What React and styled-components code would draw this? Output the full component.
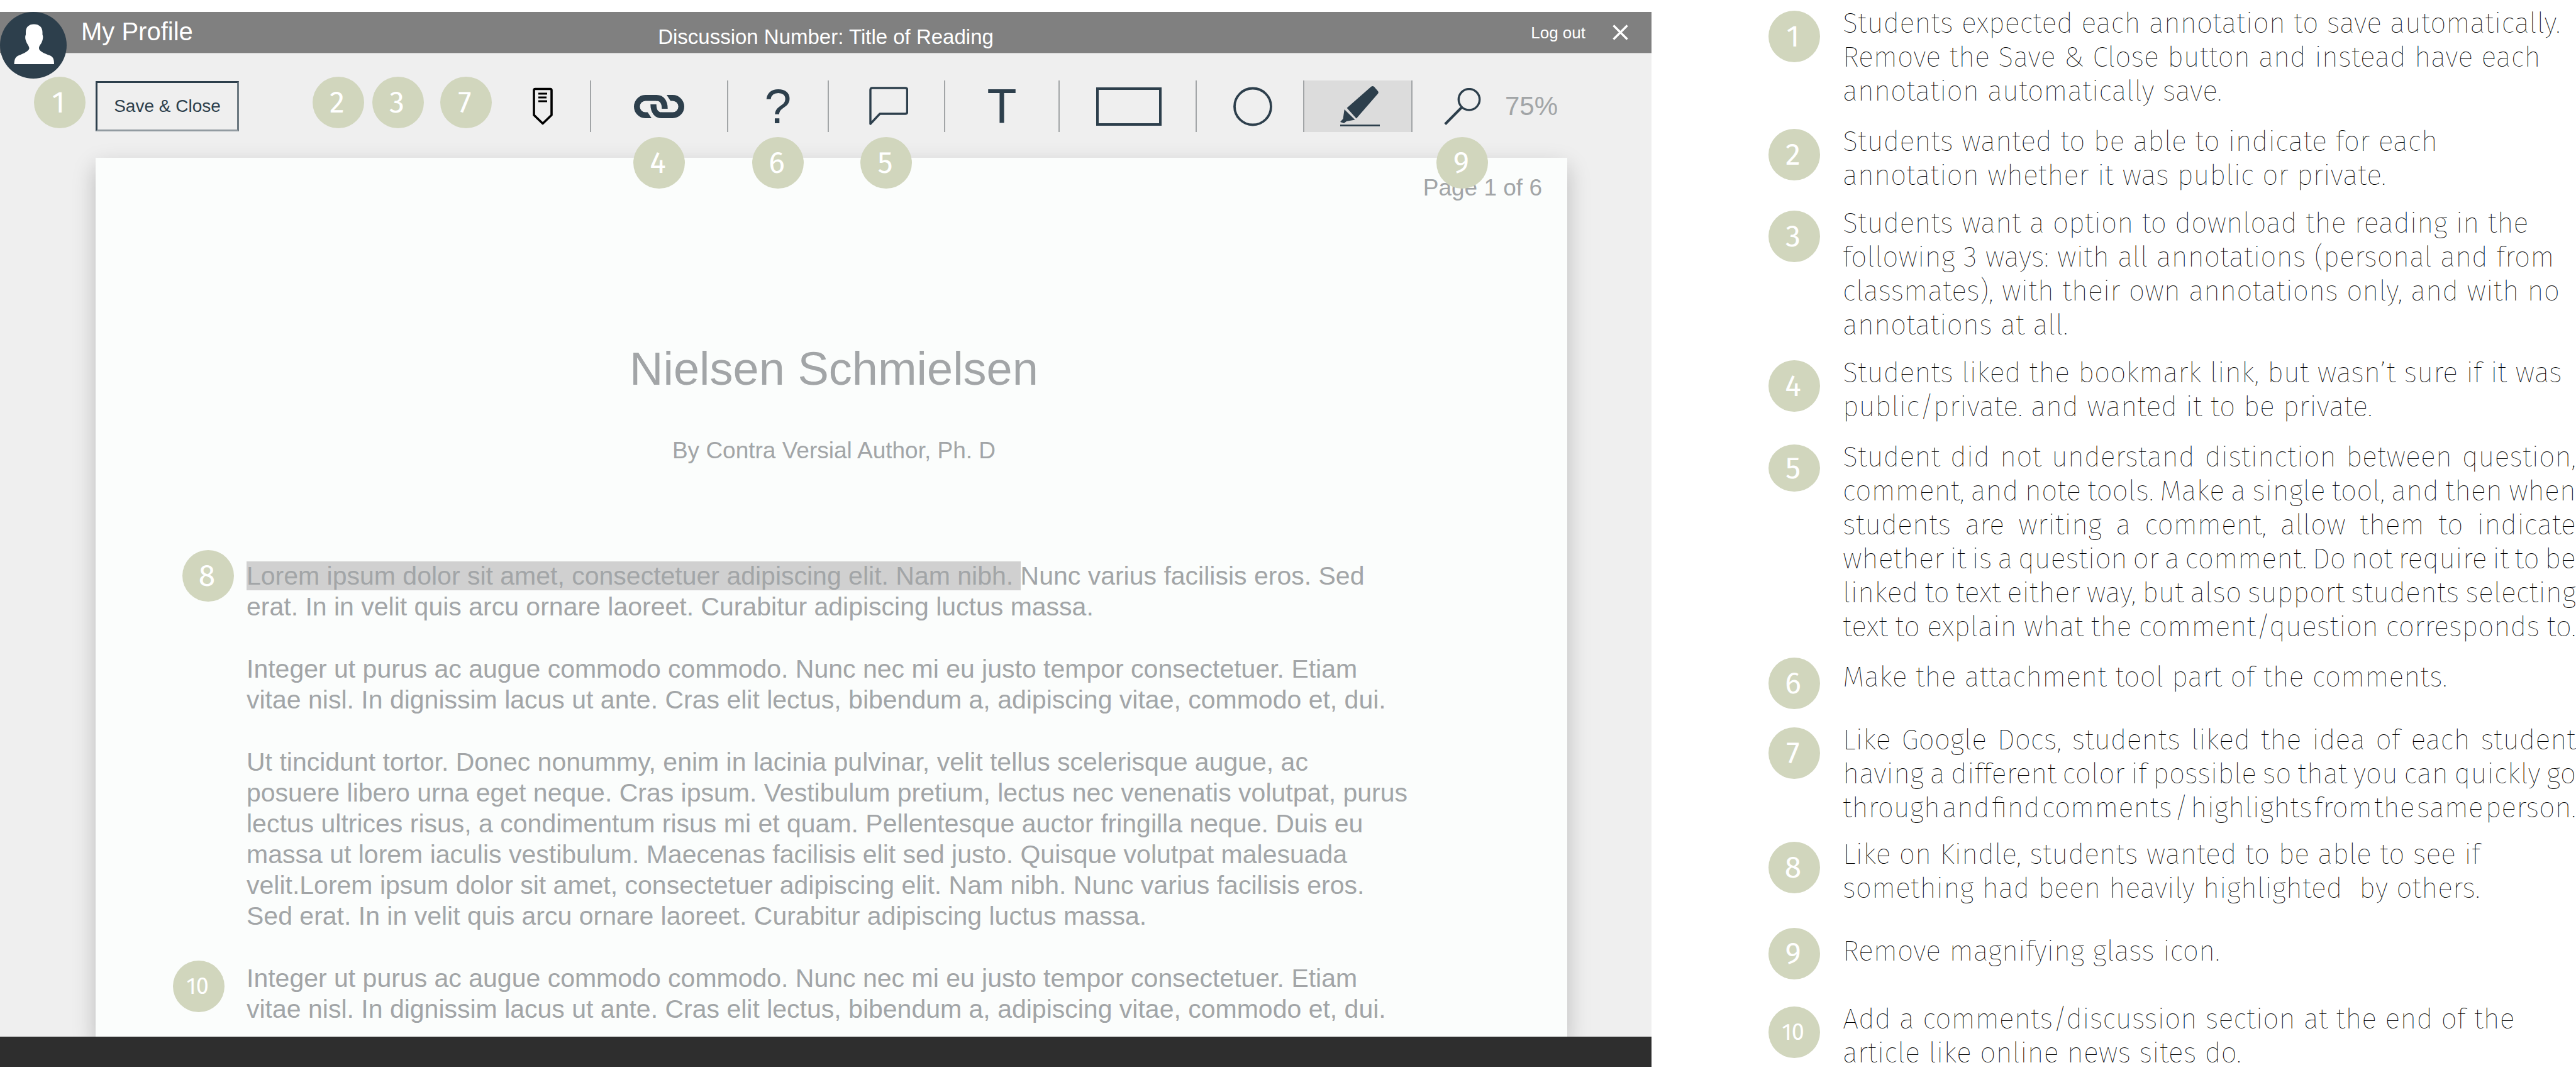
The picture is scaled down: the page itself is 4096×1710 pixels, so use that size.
import React from 'react';
import styled, { createGlobalStyle, css } from 'styled-components';

const ink = '#2d3f4c';
const grey = '#a2a5a7';
const panel = '#efefef';
const sage = '#d1d6bd';
const sans = '"Liberation Sans", Arial, sans-serif';
const fira = '"Fira Sans", "Noto Sans", sans-serif';

const GlobalStyle = createGlobalStyle`
  *, *::before, *::after { box-sizing: border-box; }
  body { margin: 0; background: #fff; font-family: ${sans}; }
  h1, p, ol { margin: 0; padding: 0; font-weight: 400; }
  svg { display: block; flex: none; }
  button { font: inherit; color: inherit; background: none; border: 0; padding: 0; cursor: pointer; }
  a { color: inherit; text-decoration: none; }
`;

const Layout = styled.div`
  display: grid;
  grid-template-columns: 2626fr 1470fr;
  align-items: start;
`;

/* ---------- numbered markers ---------- */

const Badge = styled.span`
  display: flex;
  align-items: center;
  justify-content: center;
  flex: none;
  width: 82px;
  height: ${(p) => (p.$squat ? 75 : 82)}px;
  padding-right: 4px;
  border-radius: 50%;
  background: ${sage};
  color: #fff;
  font: 400 ${(p) => (p.$small ? 36 : 48)}px/1 ${fira};
`;

const Pin = styled(Badge)`
  position: absolute;
  z-index: 3;
  top: ${(p) => p.$top}px;
  left: ${(p) => (p.$left === undefined ? 'calc(50% - 41px)' : `${p.$left}px`)};
`;

/* ---------- viewer ---------- */

const Viewer = styled.main`
  margin-top: 19px;
  background: ${panel};
`;

const Header = styled.header`
  position: relative;
  z-index: 4;
  display: grid;
  grid-template-columns: 1fr auto 1fr;
  align-items: center;
  height: 66px;
  background: #808080;
  border-bottom: 1px solid #c4c4c4;
  color: #fff;
`;

const ProfileLink = styled.a`
  padding: 0 0 4px 129px;
  font-size: 40px;
  line-height: 46px;

  svg {
    position: absolute;
    top: 0;
    left: 0;
  }
`;

const ReadingTitle = styled.div`
  padding-top: 14px;
  font-size: 33px;
  line-height: 38px;
`;

const Session = styled.div`
  display: flex;
  justify-content: flex-end;
  align-items: center;
  gap: 43px;
  padding-right: 37px;
  font-size: 26px;
  line-height: 30px;
`;

const Toolbar = styled.div`
  position: relative;
  z-index: 3;
  display: flex;
  align-items: center;
  padding: 43px 149px 41px 152px;
  color: ${ink};
`;

const SaveButton = styled.button`
  width: 228px;
  height: 80px;
  border: 3px solid ${ink};
  border-right-color: #6c7981;
  border-bottom-color: #929ba1;
  font-size: 28px;
`;

const Tools = styled.div`
  display: flex;
  height: 82px;
  margin-left: auto;
`;

const ToolCell = styled.div`
  position: relative;
  display: flex;
  width: ${(p) => p.$width}px;
  ${(p) => p.$divided && css`border-left: 2px solid ${grey};`}
`;

const ToolButton = styled.button`
  display: flex;
  flex: 1;
  align-items: center;
  justify-content: center;
  height: 82px;
  font-size: 77px;
  line-height: 82px;
  ${(p) => p.$active && css`
    background: #dcdcdc;
    border-right: 2px solid ${grey};
  `}
`;

const ZoomGroup = styled.div`
  display: flex;
  align-items: center;
  gap: 38px;
  padding-left: 50px;
`;

const ZoomTool = styled.div`
  position: relative;
`;

const ZoomLevel = styled.output`
  color: ${grey};
  font-size: 42px;
  line-height: 46px;
`;

const Sheet = styled.article`
  position: relative;
  margin: 0 134px 0 152px;
  padding: 27px 40px 19px 240px;
  background: #fbfdfc;
  box-shadow: 0 14px 34px rgba(0, 0, 0, 0.22);
  color: ${grey};
`;

const PageCount = styled.div`
  font-size: 37px;
  line-height: 42px;
  text-align: right;
`;

const Heading = styled.div`
  margin: 225px 0 154px -192px;
  text-align: center;
`;

const Title = styled.h1`
  font-size: 74px;
  line-height: 84px;
`;

const Author = styled.p`
  padding-top: 67px;
  font-size: 37px;
  line-height: 42px;
`;

const Body = styled.div`
  display: flex;
  flex-direction: column;
  gap: 50px;
`;

const Paragraph = styled.p`
  position: relative;
  font-size: 41px;
  line-height: 49px;
  white-space: pre-line;
`;

const Highlight = styled.mark`
  background: #d0d0d0;
  color: inherit;
`;

const Footer = styled.footer`
  position: relative;
  height: 48px;
  background: #2e2e2e;
`;

/* ---------- findings ---------- */

const Notes = styled.ol`
  list-style: none;
  padding: 10px 0 0 186px;
`;

const Note = styled.li`
  display: flex;
  align-items: flex-start;
  gap: 36px;
  margin-top: ${(p) => p.$gap}px;

  ${Badge} {
    margin-top: ${(p) => (p.$single ? 0 : 7)}px;
  }
`;

const NoteText = styled.div`
  flex: 1;
  padding-top: ${(p) => p.$drop || 0}px;
  color: #000;
  font: 100 45px/54px ${fira};
  white-space: pre;
`;

const JustifiedLine = styled.div`
  display: flex;
  justify-content: space-between;
`;

const Word = styled.span`
  white-space: normal;
`;

/* ---------- icons ---------- */

const AvatarIcon = () => (
  <svg width="106" height="106" viewBox="0 0 106 106" aria-hidden="true">
    <circle cx="53" cy="53" r="53" fill={ink} />
    <path fill="#fff" d="M54 19.4C46 19.4 41 24 41 32V36C39.5 39 40 44 42 48C43.5 52 46 53 46.500 58C46 62 38 66 29 69.500C24 72 23 76 22.500 83H86C86 76 85 72 80 69.500C70 66 62 62 62 58C62 53 65 52 66.500 48C68.500 43 69 39 67.500 36V32C67.500 24 62 19.400 54 19.400Z" />
  </svg>
);

const CloseIcon = () => (
  <svg width="25" height="25" viewBox="0 0 25 25" stroke="#fff" strokeWidth="3.4" aria-hidden="true">
    <path d="M1.500 1.500L23.500 23.500M23.500 1.500L1.500 23.500" />
  </svg>
);

const BookmarkIcon = () => (
  <svg width="32" height="60" viewBox="0 0 32 60" fill="none" stroke="#000" aria-hidden="true">
    <path strokeWidth="3.600" strokeLinejoin="round" d="M4 2.500H28Q30 2.500 30 4.500V44L16 57.500L2 44V4.500Q2 2.500 4 2.500Z" />
    <path strokeWidth="2.800" d="M9 10H23M9 16H22M9 22H23" />
  </svg>
);

const LinkIcon = () => (
  <svg width="80" height="37" viewBox="0 0 80 37" fill="none" stroke={ink} strokeWidth="9.400" aria-hidden="true">
    <path d="M29 32.300H18.500A13.800 13.800 0 0 1 18.500 4.700H36" />
    <path d="M51 4.700H61.500A13.800 13.800 0 0 1 61.500 32.300H44" />
    <path stroke="none" fill={panel} d="M50 0H52L58.500 10H50ZM30 37H28L21.500 27H30Z" />
    <path d="M35 4.700H36C44 4.700 49 11 49 22" />
    <path d="M45 32.300H44C36 32.300 31 26 31 15" />
  </svg>
);

const CommentIcon = () => (
  <svg width="70" height="62" viewBox="-8 0 70 62" fill="none" stroke={ink} strokeWidth="3.400" strokeLinejoin="round" aria-hidden="true">
    <path d="M5 2H57.500Q60.500 2 60.500 5V40Q60.500 43 57.500 43H17L2 59V5Q2 2 5 2Z" />
  </svg>
);

const RectangleIcon = () => (
  <svg width="108" height="61" viewBox="-4 0 108 61" fill="none" stroke={ink} strokeWidth="4" aria-hidden="true">
    <path d="M2 2H102V59H2Z" />
  </svg>
);

const CircleIcon = () => (
  <svg width="72" height="63" viewBox="-10 0 72 63" fill="none" stroke={ink} strokeWidth="3.800" aria-hidden="true">
    <circle cx="31" cy="31.500" r="29" />
  </svg>
);

const MarkerIcon = () => (
  <svg width="70" height="65" viewBox="-7 0 70 65" fill={ink} aria-hidden="true">
    <path d="M10.600 34.800L49 1Q51.500 -0.800 54 1L60 8Q61.500 10 60 12L25.700 51.400Z" />
    <path d="M6.700 37L23.500 53.500L10 56L6 59L0 57L4.500 52Z" />
    <path d="M0 61.200H63V64H0Z" />
  </svg>
);

const SearchIcon = () => (
  <svg width="59" height="59" viewBox="0 0 59 59" fill="none" stroke={ink} aria-hidden="true">
    <circle cx="40" cy="18.300" r="16.700" strokeWidth="3.400" />
    <path strokeWidth="4" d="M28.500 30.500L1.800 57.500" />
  </svg>
);

/* ---------- data ---------- */

const tools = [
  { label: 'Bookmark', width: 150, icon: <BookmarkIcon /> },
  { label: 'Link', width: 218, icon: <LinkIcon />, pin: 4 },
  { label: 'Question', width: 160, icon: '?', pin: 6 },
  { label: 'Comment', width: 185, icon: <CommentIcon />, pin: 5 },
  { label: 'Text', width: 182, icon: 'T' },
  { label: 'Rectangle', width: 218, icon: <RectangleIcon /> },
  { label: 'Circle', width: 171, icon: <CircleIcon /> },
  { label: 'Highlighter', width: 174, icon: <MarkerIcon />, active: true },
];

const integerText = `Integer ut purus ac augue commodo commodo. Nunc nec mi eu justo tempor consectetuer. Etiam
vitae nisl. In dignissim lacus ut ante. Cras elit lectus, bibendum a, adipiscing vitae, commodo et, dui.`;

const tortorText = `Ut tincidunt tortor. Donec nonummy, enim in lacinia pulvinar, velit tellus scelerisque augue, ac
posuere libero urna eget neque. Cras ipsum. Vestibulum pretium, lectus nec venenatis volutpat, purus
lectus ultrices risus, a condimentum risus mi et quam. Pellentesque auctor fringilla neque. Duis eu
massa ut lorem iaculis vestibulum. Maecenas facilisis elit sed justo. Quisque volutpat malesuada
velit.Lorem ipsum dolor sit amet, consectetuer adipiscing elit. Nam nibh. Nunc varius facilisis eros.
Sed erat. In in velit quis arcu ornare laoreet. Curabitur adipiscing luctus massa.`;

const notes = [
  { gap: 0, text: `Students expected each annotation to save automatically.
Remove the Save & Close button and instead have each
annotation automatically save.` },
  { gap: 26, text: `Students wanted to be able to indicate for each
annotation whether it was public or private.` },
  { gap: 22, text: `Students want a option to download the reading in the
following 3 ways: with all annotations (personal and from
classmates), with their own annotations only, and with no
annotations at all.` },
  { gap: 22, text: `Students liked the bookmark link, but wasn’t sure if it was
public/private. and wanted it to be private.` },
  { gap: 26, justified: true, squat: true, text: `Student did not understand distinction between question,
comment, and note tools. Make a single tool, and then when
students are writing a comment, allow them to indicate
whether it is a question or a comment. Do not require it to be
linked to text either way, but also support students selecting
text to explain what the comment/question corresponds to.` },
  { gap: 22, single: true, drop: 4, text: 'Make the attachment tool part of the comments.' },
  { gap: 22, justified: true, text: `Like Google Docs, students liked the idea of each student
having a different color if possible so that you can quickly go
through and find comments / highlights from the same person.` },
  { gap: 20, text: `Like on Kindle, students wanted to be able to see if
something had been heavily highlighted  by others.` },
  { gap: 36, single: true, drop: 10, text: 'Remove magnifying glass icon.' },
  { gap: 36, text: `Add a comments/discussion section at the end of the
article like online news sites do.` },
];

const Justified = ({ text }) =>
  text.split('\n').map((line) => (
    <JustifiedLine key={line}>
      {line.split(' ').map((word, i) => (
        <Word key={i}>{word} </Word>
      ))}
    </JustifiedLine>
  ));

export default function App() {
  return (
    <Layout>
      <GlobalStyle />
      <Viewer>
        <Header>
          <ProfileLink href="#profile">
            <AvatarIcon />
            My Profile
          </ProfileLink>
          <ReadingTitle>Discussion Number: Title of Reading</ReadingTitle>
          <Session>
            <a href="#logout">Log out</a>
            <button type="button" aria-label="Close"><CloseIcon /></button>
          </Session>
        </Header>

        <Toolbar>
          <SaveButton type="button">Save &amp; Close</SaveButton>
          <Pin $top={37} $left={54}>1</Pin>
          <Pin $top={37} $left={497}>2</Pin>
          <Pin $top={37} $left={592}>3</Pin>
          <Pin $top={37} $left={700}>7</Pin>
          <Tools>
            {tools.map((tool, i) => (
              <ToolCell key={tool.label} $width={tool.width} $divided={i > 0}>
                <ToolButton type="button" aria-label={tool.label} $active={tool.active}>
                  {tool.icon}
                </ToolButton>
                {tool.pin && <Pin $top={90}>{tool.pin}</Pin>}
              </ToolCell>
            ))}
            <ZoomGroup>
              <ZoomTool>
                <ToolButton type="button" aria-label="Zoom"><SearchIcon /></ToolButton>
                <Pin $top={90}>9</Pin>
              </ZoomTool>
              <ZoomLevel>75%</ZoomLevel>
            </ZoomGroup>
          </Tools>
        </Toolbar>

        <Sheet>
          <PageCount>Page 1 of 6</PageCount>
          <Heading>
            <Title>Nielsen Schmielsen</Title>
            <Author>By Contra Versial Author, Ph. D</Author>
          </Heading>
          <Body>
            <Paragraph>
              <Pin $top={-17} $left={-102}>8</Pin>
              <Highlight>Lorem ipsum dolor sit amet, consectetuer adipiscing elit. Nam nibh. </Highlight>
              {'Nunc varius facilisis eros. Sed\nerat. In in velit quis arcu ornare laoreet. Curabitur adipiscing luctus massa.'}
            </Paragraph>
            <Paragraph>{integerText}</Paragraph>
            <Paragraph>{tortorText}</Paragraph>
            <Paragraph>
              <Pin $small $top={-4} $left={-117}>10</Pin>
              {integerText}
            </Paragraph>
          </Body>
        </Sheet>
        <Footer />
      </Viewer>

      <Notes>
        {notes.map((note, i) => (
          <Note key={note.text} $gap={note.gap} $single={note.single}>
            <Badge $squat={note.squat} $small={i === 9}>{i + 1}</Badge>
            <NoteText $drop={note.drop}>
              {note.justified ? <Justified text={note.text} /> : note.text}
            </NoteText>
          </Note>
        ))}
      </Notes>
    </Layout>
  );
}
